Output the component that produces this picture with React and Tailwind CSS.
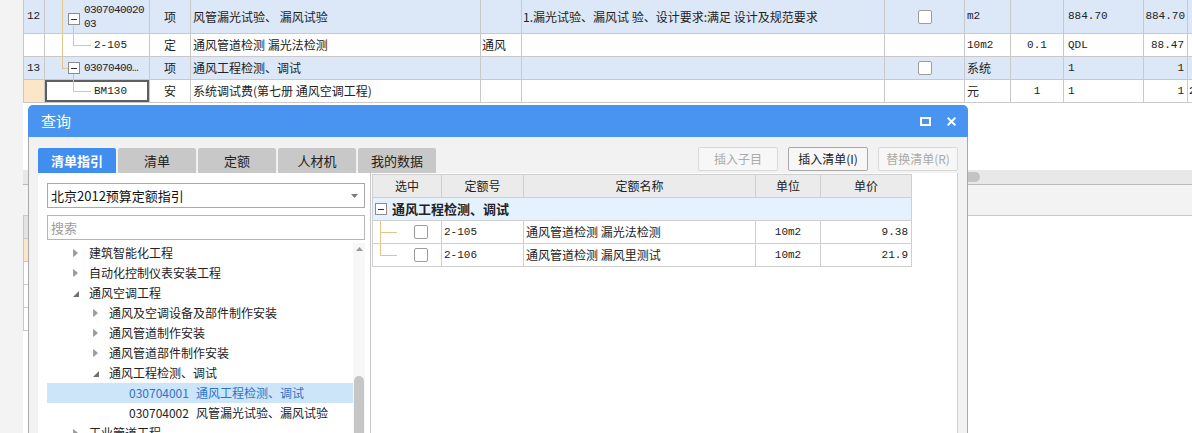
import { X } from "lucide-react";

const mono = "font-['Liberation_Mono','Noto_Sans_CJK_SC',monospace]";

const TOP_COLS =
  "grid grid-cols-[21px_105px_41px_290px_41px_363px_80px_46px_53px_80px_44px_1fr]";

function MinusBox({ className = "" }) {
  return (
    <span
      className={`flex h-[12px] w-[12px] items-center justify-center border border-[#8c8c8c] bg-white ${className}`}
    >
      <span className="h-px w-[6px] bg-[#333]" />
    </span>
  );
}

function CheckBox() {
  return <span className="block h-[14px] w-[14px] rounded-[2px] border border-[#9c9c9c] bg-white" />;
}

function Cell({ children, className = "" }) {
  return (
    <div className={`flex items-center overflow-hidden whitespace-nowrap border-r border-[#c9c9c9] ${className}`}>
      {children}
    </div>
  );
}

// tree connector lines drawn inside the code cell
function Line({ className }) {
  return <span className={`absolute bg-[#e5c48b] ${className}`} />;
}

function TopTable() {
  return (
    <div className="border-l border-[#c9c9c9] text-[12px]">
      {/* row 12 */}
      <div className={`${TOP_COLS} h-[34px] border-b border-[#c9c9c9] bg-[#dce7f8]`}>
        <Cell className={`pl-[3px] ${mono} text-[11px]`}>12</Cell>
        <Cell className="relative">
          <Line className="left-[17px] top-0 h-full w-px" />
          <Line className="left-[28px] top-[26px] bottom-0 w-px" />
          <MinusBox className="absolute left-[23px] top-[13px]" />
          <span className={`ml-[39px] whitespace-pre leading-[14px] ${mono} text-[11px] tracking-[-0.6px]`}>
            {"0307040020\n03"}
          </span>
        </Cell>
        <Cell className="justify-center">项</Cell>
        <Cell className="pl-[2px]">风管漏光试验、 漏风试验</Cell>
        <Cell />
        <Cell className="pl-[1px]">1.漏光试验、漏风试 验、设计要求:满足 设计及规范要求</Cell>
        <Cell className="justify-center">
          <CheckBox />
        </Cell>
        <Cell className={`pl-[2px] ${mono} text-[11px]`}>m2</Cell>
        <Cell />
        <Cell className={`pl-[4px] ${mono} text-[11px]`}>884.70</Cell>
        <Cell className={`justify-end pr-[2px] ${mono} text-[11px]`}>884.70</Cell>
        <div />
      </div>
      {/* 2-105 */}
      <div className={`${TOP_COLS} h-[23px] border-b border-[#c9c9c9] bg-white`}>
        <Cell />
        <Cell className="relative">
          <Line className="left-[17px] top-0 h-full w-px" />
          <Line className="left-[28px] top-0 h-[11px] w-px" />
          <Line className="left-[28px] top-[11px] h-px w-[18px]" />
          <span className={`ml-[49px] ${mono} text-[11px]`}>2-105</span>
        </Cell>
        <Cell className="justify-center">定</Cell>
        <Cell className="pl-[2px]">通风管道检测 漏光法检测</Cell>
        <Cell className="pl-[1px]">通风</Cell>
        <Cell />
        <Cell />
        <Cell className={`pl-[2px] ${mono} text-[11px]`}>10m2</Cell>
        <Cell className={`justify-center ${mono} text-[11px]`}>0.1</Cell>
        <Cell className={`pl-[4px] ${mono} text-[11px]`}>QDL</Cell>
        <Cell className={`justify-end pr-[3px] ${mono} text-[11px]`}>88.47</Cell>
        <div />
      </div>
      {/* row 13 */}
      <div className={`${TOP_COLS} h-[23px] border-b border-[#c9c9c9] bg-[#dce7f8]`}>
        <Cell className={`pl-[3px] ${mono} text-[11px]`}>13</Cell>
        <Cell className="relative">
          <Line className="left-[17px] top-0 h-[11px] w-px" />
          <Line className="left-[17px] top-[11px] h-px w-[6px]" />
          <Line className="left-[28px] top-[17px] bottom-0 w-px" />
          <MinusBox className="absolute left-[23px] top-[5px]" />
          <span className={`ml-[39px] ${mono} text-[11px] tracking-[-0.6px]`}>03070400…</span>
        </Cell>
        <Cell className="justify-center">项</Cell>
        <Cell className="pl-[2px]">通风工程检测、调试</Cell>
        <Cell />
        <Cell />
        <Cell className="justify-center">
          <CheckBox />
        </Cell>
        <Cell className="pl-[2px]">系统</Cell>
        <Cell />
        <Cell className={`pl-[4px] ${mono} text-[11px]`}>1</Cell>
        <Cell className={`justify-end pr-[3px] ${mono} text-[11px]`}>1</Cell>
        <div />
      </div>
      {/* BM130 */}
      <div className={`${TOP_COLS} h-[23px] border-b border-[#c9c9c9] bg-white`}>
        <Cell className="bg-[#fce6c8]" />
        <Cell className="relative shadow-[inset_0_0_0_2px_#5f5f5f]">
          <Line className="left-[28px] top-0 h-[11px] w-px" />
          <Line className="left-[28px] top-[11px] h-px w-[18px]" />
          <span className={`ml-[49px] ${mono} text-[11px]`}>BM130</span>
        </Cell>
        <Cell className="justify-center">安</Cell>
        <Cell className="pl-[2px]">系统调试费(第七册 通风空调工程)</Cell>
        <Cell />
        <Cell />
        <Cell />
        <Cell className="pl-[2px]">元</Cell>
        <Cell className={`justify-center ${mono} text-[11px]`}>1</Cell>
        <Cell className={`pl-[4px] ${mono} text-[11px]`}>1</Cell>
        <Cell className={`justify-end pr-[3px] ${mono} text-[11px]`}>1</Cell>
        <div className={`flex items-center pl-[1px] ${mono} text-[11px]`}>2</div>
      </div>
    </div>
  );
}

function LowerTable() {
  const rows = [0, 1, 2, 3];
  return (
    <div className="w-[260px] border-l border-[#c9c9c9]">
      <div className="h-[23px] border-b border-[#c9c9c9] bg-[#e3e3e3]" />
      {rows.map((r) => (
        <div key={r} className="flex h-[23px] border-b border-[#c9c9c9]">
          <div className={`w-[21px] border-r border-[#c9c9c9] ${r === 0 ? "bg-[#fce6c8]" : "bg-white"}`} />
        </div>
      ))}
    </div>
  );
}

function Arrow({ open }) {
  if (open) {
    return (
      <svg width="6" height="6" viewBox="0 0 6 6" className="mt-[2px]">
        <polygon points="6,0 6,6 0,6" fill="#6f6f6f" />
      </svg>
    );
  }
  return (
    <svg width="5" height="8" viewBox="0 0 5 8">
      <polygon points="0.5,0.5 4.5,4 0.5,7.5" fill="#9a9a9a" stroke="#8a8a8a" strokeWidth="0.6" />
    </svg>
  );
}

const treeItems = [
  { lvl: 1, open: false, text: "建筑智能化工程" },
  { lvl: 1, open: false, text: "自动化控制仪表安装工程" },
  { lvl: 1, open: true, text: "通风空调工程" },
  { lvl: 2, open: false, text: "通风及空调设备及部件制作安装" },
  { lvl: 2, open: false, text: "通风管道制作安装" },
  { lvl: 2, open: false, text: "通风管道部件制作安装" },
  { lvl: 2, open: true, text: "通风工程检测、调试" },
  { lvl: 3, code: "030704001", text: "通风工程检测、调试", sel: true },
  { lvl: 3, code: "030704002", text: "风管漏光试验、漏风试验" },
  { lvl: 1, open: false, text: "工业管道工程" },
];

function TreeRow({ item }) {
  if (item.lvl === 3) {
    return (
      <div
        className={`flex h-[20px] items-center pl-[82px] ${item.sel ? "bg-[#cce5f8] text-[#2f73c8]" : "text-[#222]"}`}
      >
        <span className="w-[67px] text-[12px]">{item.code}</span>
        <span>{item.text}</span>
      </div>
    );
  }
  return (
    <div className={`flex h-[20px] items-center text-[#222] ${item.lvl === 1 ? "pl-[26px]" : "pl-[46px]"}`}>
      <span className="flex w-[16px] items-center">
        <Arrow open={item.open} />
      </span>
      <span>{item.text}</span>
    </div>
  );
}

const RT_COLS = "grid grid-cols-[69px_82px_232px_65px_91px]";

function QuotaRow({ code, name, price, last }) {
  return (
    <div className={`${RT_COLS} h-[23px] border-b border-[#cfcfcf]`}>
      <div className="relative flex items-center border-r border-[#cfcfcf] pl-[41px]">
        <span className={`absolute left-[7px] top-0 w-px bg-[#e5c48b] ${last ? "h-[11px]" : "h-full"}`} />
        <span className="absolute left-[7px] top-[11px] h-px w-[17px] bg-[#e5c48b]" />
        <CheckBox />
      </div>
      <div className={`flex items-center border-r border-[#cfcfcf] pl-[2px] ${mono} text-[11px]`}>{code}</div>
      <div className="flex items-center border-r border-[#cfcfcf] pl-[2px]">{name}</div>
      <div className={`flex items-center justify-center border-r border-[#cfcfcf] ${mono} text-[11px]`}>10m2</div>
      <div className={`flex items-center justify-end border-r border-[#cfcfcf] pr-[3px] ${mono} text-[11px]`}>
        {price}
      </div>
    </div>
  );
}

function Dialog() {
  const tabs = ["清单指引", "清单", "定额", "人材机", "我的数据"];
  return (
    <div className="absolute left-[28px] top-[105px] flex h-[345px] w-[940px] flex-col">
      {/* title bar */}
      <div className="flex h-[32px] shrink-0 items-center justify-between rounded-t-[5px] bg-[#4894f0] pl-[13px] pr-[10px]">
        <span className="text-[15px] text-white">查询</span>
        <div className="flex items-center gap-[14px]">
          <span className="block h-[9px] w-[11px] border-2 border-white" />
          <X size={13} strokeWidth={3.5} className="text-white" />
        </div>
      </div>
      {/* body */}
      <div className="flex flex-1 flex-col border-x border-[#a9a9a9] bg-[#f2f2f2] px-[9px] pt-[11px]">
        <div className="flex h-[25px] shrink-0 items-start justify-between">
          <div className="flex gap-[2px]">
            {tabs.map((t, i) => (
              <div
                key={t}
                className={`flex h-[25px] w-[78px] items-center justify-center rounded-t-[2px] text-[13px] ${
                  i === 0 ? "bg-[#3f8ef0] font-bold text-white" : "bg-[#c8c8c8] text-[#222]"
                }`}
              >
                {t}
              </div>
            ))}
          </div>
          <div className="-mt-px flex gap-[10px] text-[12px]">
            <div className="flex h-[24px] w-[80px] items-center justify-center rounded-[2px] border border-[#d9d9d9] bg-[#f7f7f7] text-[#aaa]">
              插入子目
            </div>
            <div className="flex h-[24px] w-[80px] items-center justify-center rounded-[2px] border border-[#a8a8a8] bg-[#f7f7f7] text-[#222]">
              插入清单(I)
            </div>
            <div className="flex h-[24px] w-[80px] items-center justify-center rounded-[2px] border border-[#d9d9d9] bg-[#f7f7f7] text-[#aaa]">
              替换清单(R)
            </div>
          </div>
        </div>

        <div className="flex flex-1 bg-white">
          {/* left: guide tree */}
          <div className="flex w-[333px] flex-col border-r border-[#c6c6c6] pl-[9px] pr-[5px] pt-[10px]">
            <div className="flex h-[25px] items-center justify-between border border-[#a9a9a9] pl-[3px] pr-[6px] text-[13px] text-[#111]">
              <span>北京2012预算定额指引</span>
              <svg width="7" height="4" viewBox="0 0 7 4">
                <polygon points="0,0 7,0 3.5,4" fill="#7a7a7a" />
              </svg>
            </div>
            <div className="mt-[7px] flex h-[25px] items-center border border-[#b5b5b5] pl-[3px] text-[13px] text-[#9c9c9c]">
              搜索
            </div>
            <div className="mt-[3px] flex flex-1 overflow-hidden">
              <div className="flex-1 text-[12px]">
                {treeItems.map((it, i) => (
                  <TreeRow key={i} item={it} />
                ))}
              </div>
              <div className="flex w-[12px] flex-col items-center bg-[#f7f7f7]">
                <svg width="7" height="4" viewBox="0 0 7 4" className="mt-[4px]">
                  <polygon points="3.5,0 7,4 0,4" fill="#9a9a9a" />
                </svg>
                <div className="mt-[125px] w-[10px] flex-1 rounded-t-full bg-[#c6c6c6]" />
              </div>
            </div>
          </div>

          {/* right: quota table */}
          <div className="flex-1 border-r border-[#cfcfcf] pl-px pt-px">
            <div className="w-[540px] border-l border-t border-[#cfcfcf] text-[12px]">
              <div className={`${RT_COLS} h-[23px] border-b border-[#cfcfcf] bg-[#ebebeb] text-[#222]`}>
                {["选中", "定额号", "定额名称", "单位", "单价"].map((h) => (
                  <div key={h} className="flex items-center justify-center border-r border-[#cfcfcf]">
                    {h}
                  </div>
                ))}
              </div>
              <div className="flex h-[23px] items-center border-b border-r border-[#cfcfcf] bg-[#e5f1fc] pl-[2px]">
                <MinusBox />
                <span className="ml-[5px] text-[13px] font-bold">通风工程检测、调试</span>
              </div>
              <QuotaRow code="2-105" name="通风管道检测 漏光法检测" price="9.38" />
              <QuotaRow code="2-106" name="通风管道检测 漏风里测试" price="21.9" last />
            </div>
          </div>
        </div>
      </div>
    </div>
  );
}

export default function App() {
  return (
    <div className="relative h-[433px] w-[1192px] overflow-hidden bg-white font-['Noto_Sans_CJK_SC','Liberation_Sans',sans-serif] text-[12px] text-[#222]">
      <div className="flex h-full">
        <div className="w-[23px] shrink-0 bg-[#f3f3f3]" />
        <div className="flex min-w-0 flex-1 flex-col">
          <TopTable />
          <div className="h-[67px] shrink-0" />
          {/* horizontal scrollbar */}
          <div className="flex h-[15px] shrink-0 items-center border-b border-[#b9b9b9] bg-[#e8e8e8]">
            <div className="ml-[917px] h-[10px] w-[40px] rounded-full bg-[#c4c4c4]" />
          </div>
          <div className="h-[31px] shrink-0 border-b border-[#c9c9c9] bg-[#f3f3f3]" />
          <LowerTable />
        </div>
      </div>
      <Dialog />
    </div>
  );
}
